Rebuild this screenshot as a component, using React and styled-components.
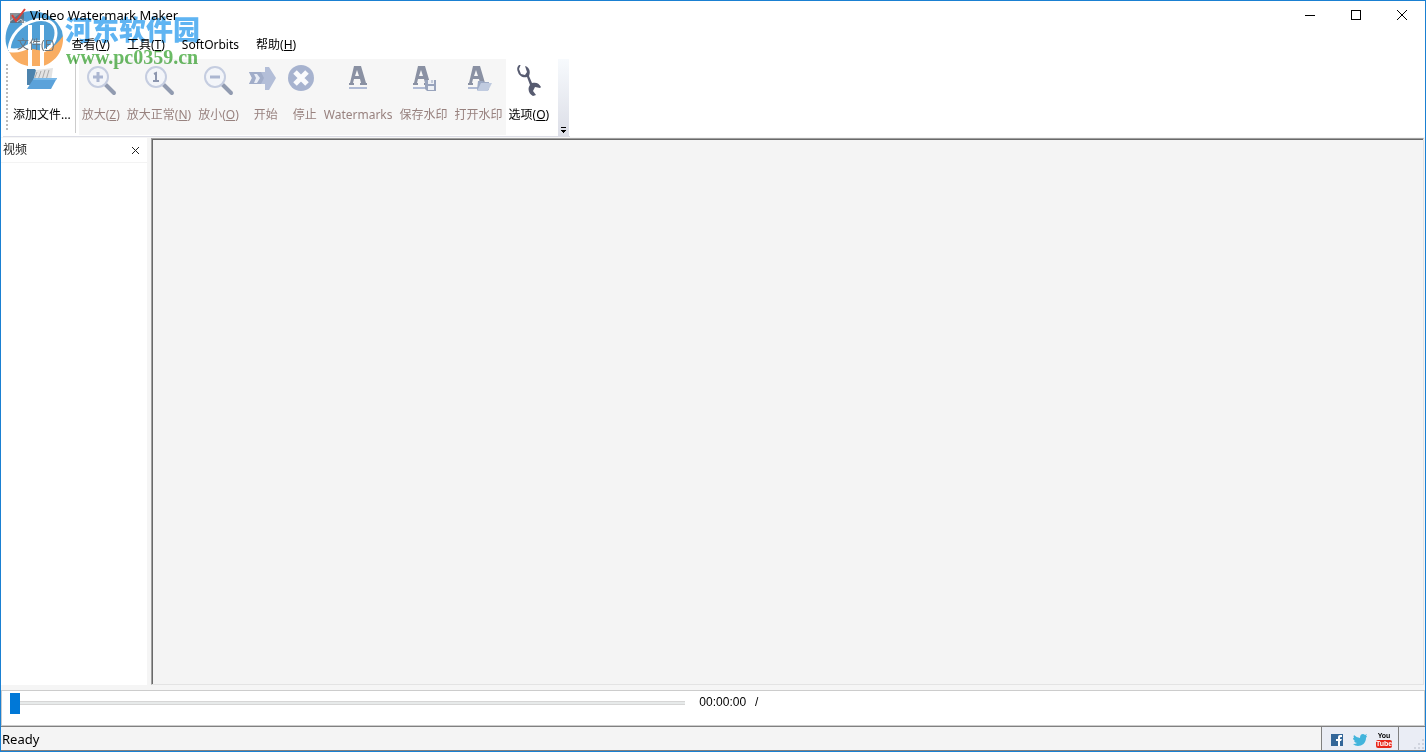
import React, { useState } from 'react';
import styled, { createGlobalStyle } from 'styled-components';

const GlobalStyle = createGlobalStyle`
  * {
    box-sizing: border-box;
  }
  body {
    margin: 0;
    font-family: 'Noto Sans', 'Noto Sans CJK SC', sans-serif;
    font-size: 12px;
    line-height: 16px;
    color: #000;
  }
  button {
    font: inherit;
    color: inherit;
    background: none;
    border: 0;
    padding: 0;
  }
`;

const tools = [
  { id: 'zoomIn', label: '放大', hotkey: 'Z' },
  { id: 'zoomNormal', label: '放大正常', hotkey: 'N' },
  { id: 'zoomOut', label: '放小', hotkey: 'O' },
  { id: 'start', label: '开始' },
  { id: 'stop', label: '停止' },
  { id: 'text', label: 'Watermarks' },
  { id: 'saveText', label: '保存水印' },
  { id: 'openText', label: '打开水印' },
];

const menus = [
  { label: '文件', hotkey: 'F' },
  { label: '查看', hotkey: 'V' },
  { label: '工具', hotkey: 'T' },
  { label: 'SoftOrbits' },
  { label: '帮助', hotkey: 'H' },
];

function Caption({ label, hotkey }) {
  return (
    <>
      {label}
      {hotkey && (
        <>
          (<u>{hotkey}</u>)
        </>
      )}
    </>
  );
}

function Magnifier({ children }) {
  return (
    <svg width="32" height="32" viewBox="0 0 32 32">
      <path d="M21 20l8 8" stroke="#919bb0" strokeWidth="4" strokeLinecap="round" />
      <circle cx="13" cy="12" r="10" fill="#f3f5f9" stroke="#c5cde0" strokeWidth="2" />
      {children}
    </svg>
  );
}

function LetterA({ shift = 0, children }) {
  return (
    <svg width="32" height="32" viewBox="0 0 32 32">
      <g transform={`translate(${shift} 0)`}>
        <path
          fillRule="evenodd"
          d="M12 1h7l5 17h1v2h-7v-2h1l-1-4h-6l-1 4h1v2H7v-2h1zM15 5l-2 6h4z"
          fill="#8a91a3"
        />
        <path d="M7 23h18" stroke="#b0bbd5" strokeWidth="2" />
      </g>
      {children}
    </svg>
  );
}

function ToolIcon({ id }) {
  switch (id) {
    case 'zoomIn':
      return (
        <Magnifier>
          <path d="M13 7v10M8 12h10" stroke="#abb6d1" strokeWidth="3" />
        </Magnifier>
      );
    case 'zoomNormal':
      return (
        <Magnifier>
          <path d="M11 9l2-1v8M10 16h6" fill="none" stroke="#8c96af" strokeWidth="2" />
        </Magnifier>
      );
    case 'zoomOut':
      return (
        <Magnifier>
          <path d="M8 12h10" stroke="#abb6d1" strokeWidth="3" />
        </Magnifier>
      );
    case 'start':
      return (
        <svg width="32" height="32" viewBox="0 0 32 32">
          <path d="M3 7h16V2h4l7 11-7 12h-4v-6H3l3-6z" fill="#b3bed8" />
          <path d="M3 7h12l3 6-3 6H3l3-6z" fill="#a1adc9" />
          <path d="M8 9h3l3 4-3 5H8l2-5z" fill="#e8ecf5" />
        </svg>
      );
    case 'stop':
      return (
        <svg width="32" height="32" viewBox="0 0 32 32">
          <circle cx="16" cy="13" r="13" fill="#a7b3cf" />
          <path d="M10 7l12 12M22 7L10 19" stroke="#fafbfd" strokeWidth="5" />
        </svg>
      );
    case 'text':
      return <LetterA />;
    case 'saveText':
      return (
        <LetterA shift={-2}>
          <path d="M17 15h11v11H19l-2-2z" fill="#98a3bc" />
          <path d="M20 15h6v4h-6zM20 21h6v4h-6z" fill="#eef1f6" />
          <path d="M24 15v3" stroke="#98a3bc" />
        </LetterA>
      );
    case 'openText':
      return (
        <LetterA shift={-2}>
          <path d="M15 16h5l1 1h5v8H14z" fill="#9daac5" />
          <path d="M18 18h11l-4 8H14z" fill="#c0cbe0" />
        </LetterA>
      );
    case 'options':
      return (
        <svg width="32" height="32" viewBox="0 0 32 32">
          <path
            d="M8-2C5-1 3 2 5 6c1 4 5 6 9 5l3 8c-3 4-1 9 3 11l3-1-3-4 2-4 5 1 1-1c-2-4-5-5-9-4l-3-7c2-5 0-9-4-10l2 6-2 3-4-1-2-5z"
            transform="translate(0 1)"
            fill="#575b70"
          />
        </svg>
      );
    default:
      return (
        <svg width="32" height="32" viewBox="0 0 32 32">
          <path d="M1 4h8l2 3h4v13H1z" fill="#4d83ad" />
          <path d="M10 5l17-2-2 14H7z" fill="#e3e3e3" />
          <path d="M11 7L8 15M15 6l-3 9M19 5l-3 10M23 5l-3 10" stroke="#aaa" />
          <path d="M8 13h23l-6 11H1z" fill="#5ba2da" />
          <path d="M8 13h23l-1 2H7z" fill="#79b8e8" />
        </svg>
      );
  }
}

function SiteLogo() {
  return (
    <svg width="60" height="60" viewBox="0 0 60 60">
      <path
        d="M2 36C-1 18 11 3 28 3c13 0 25 8 30 20l1 6c-4 8-10 13-18 16H6q-3-4-4-9z"
        fill="#4f9fd6"
      />
      <path d="M59 28c1 14-7 26-20 30H24C14 56 8 51 5 43l19-3 15 3c9-2 15-8 20-15z" fill="#f9ad62" />
      {/* white strokes that cut the disc into its parts */}
      <g fill="none" stroke="#fff">
        <path d="M5 42C6 28 16 16 32 12c12-2 20 3 20 13 0 9-6 16-15 19" strokeWidth="3" />
        <path d="M5 42q10 2 20-4" strokeWidth="4" />
        <path d="M26 17v42M38 17v42" strokeWidth="4" />
        <path d="M26 34h12" strokeWidth="3" />
      </g>
      <path d="M19 10l1 3 3 1-3 1-1 3-1-3-3-1 3-1z" fill="#fff" />
    </svg>
  );
}

function App() {
  const [position, setPosition] = useState(0);

  return (
    <Window>
      <GlobalStyle />
      <TitleBar>
        <AppIcon width="17" height="16" viewBox="0 0 17 16">
          <path d="M1 5h14v10H1z" fill="#59616b" opacity="0.7" />
          <path d="M1 13l4-3 3 4 4-3 2 3" stroke="#c5c9ce" fill="none" />
          <path d="M3 7l4 6L16 1" stroke="#db4137" strokeWidth="2" fill="none" />
        </AppIcon>
        <Title>Video Watermark Maker</Title>
        <CaptionButton aria-label="Minimize">
          <svg width="12" height="12" shapeRendering="crispEdges">
            <path d="M1 6h10v1H1z" />
          </svg>
        </CaptionButton>
        <CaptionButton aria-label="Maximize">
          <svg width="12" height="12" shapeRendering="crispEdges">
            <path fillRule="evenodd" d="M1 1h10v10H1zM2 2v8h8V2z" />
          </svg>
        </CaptionButton>
        <CaptionButton aria-label="Close">
          <svg width="12" height="12">
            <path d="M1 1l10 10M11 1L1 11" stroke="#000" />
          </svg>
        </CaptionButton>
      </TitleBar>

      <MenuBar>
        {menus.map((menu) => (
          <MenuItem key={menu.label} $dimmed={menu.hotkey === 'F'}>
            <Caption label={menu.label} hotkey={menu.hotkey} />
          </MenuItem>
        ))}
      </MenuBar>

      <ToolBar>
        <Gripper />
        <ToolButton>
          <ToolIcon id="add" />
          <ToolLabel>添加文件...</ToolLabel>
        </ToolButton>
        <Separator />
        <DisabledTools>
          {tools.map((tool) => (
            <ToolButton key={tool.id} disabled>
              <ToolIcon id={tool.id} />
              <ToolLabel>
                <Caption label={tool.label} hotkey={tool.hotkey} />
              </ToolLabel>
            </ToolButton>
          ))}
        </DisabledTools>
        <ToolButton>
          <ToolIcon id="options" />
          <ToolLabel>
            <Caption label="选项" hotkey="O" />
          </ToolLabel>
        </ToolButton>
        <Overflow aria-label="Toolbar options">
          <svg width="7" height="7" shapeRendering="crispEdges">
            <path d="M1 0h5v1H1zM1 3h5v1H1zM2 4h3v1H2zM3 5h1v1H3z" />
          </svg>
        </Overflow>
      </ToolBar>

      <Workspace>
        <SidePanel>
          <PanelHeader>
            <span>视频</span>
            <PanelClose aria-label="Close panel">
              <svg width="9" height="9">
                <path d="M1 1l7 7M8 1L1 8" stroke="#222" />
              </svg>
            </PanelClose>
          </PanelHeader>
        </SidePanel>
        <Preview />
      </Workspace>

      <Player>
        <SeekBar
          type="range"
          aria-label="Position"
          min="0"
          max="100"
          value={position}
          onChange={(e) => setPosition(Number(e.target.value))}
        />
        <Time>
          <span>00:00:00</span>
          <span>/</span>
        </Time>
      </Player>

      <StatusBar>
        <StatusText>Ready</StatusText>
        <Social>
          <a href="#facebook" aria-label="Facebook">
            <svg width="14" height="14" viewBox="0 0 14 14">
              <path d="M1 1h12v12H1z" fill="#336699" />
              <path d="M8 13V8H6V6h2V4q0-2 2-2h2v2h-1q-1 0-1 1v1h2l-1 2h-1v5z" fill="#fff" />
            </svg>
          </a>
          <a href="#twitter" aria-label="Twitter">
            <svg width="14" height="14" viewBox="0 0 14 14">
              <path
                d="M1 2q3 3 6 3 0-4 3-4 1 0 2 1l2-1-1 2 1 0-1 2c0 5-4 8-8 8q-3 0-5-2 3 0 4-1-2 0-3-2h1Q0 7 0 5l1 0Q0 4 1 2z"
                fill="#42b4dc"
              />
            </svg>
          </a>
          <YouTube href="#youtube" aria-label="YouTube">
            <span>You</span>
            <b>Tube</b>
          </YouTube>
        </Social>
        <SizeGrip>
          <svg width="12" height="12" viewBox="0 0 12 12">
            <path d="M9 1h2v2H9zM5 5h2v2H5zM9 5h2v2H9zM1 9h2v2H1zM5 9h2v2H5zM9 9h2v2H9z" fill="#d0d4de" />
          </svg>
        </SizeGrip>
      </StatusBar>

      <SiteMark>
        <SiteLogo />
        <SiteText>
          <SiteName>河东软件园</SiteName>
          <SiteUrl>www.pc0359.cn</SiteUrl>
        </SiteText>
      </SiteMark>
    </Window>
  );
}

const Window = styled.div`
  position: relative;
  display: flex;
  flex-direction: column;
  height: 100vh;
  background: #fff;
  border: 1px solid #1a80d2;
  overflow: hidden;
`;

const TitleBar = styled.header`
  display: flex;
  align-items: center;
  height: 30px;
  padding-left: 8px;
`;

const AppIcon = styled.svg`
  position: relative;
  z-index: 1;
`;

const Title = styled.span`
  position: relative;
  z-index: 1;
  flex: 1;
  padding: 0 0 2px 4px;
  font-size: 13px;
`;

const CaptionButton = styled.button`
  display: flex;
  align-items: center;
  justify-content: center;
  width: 46px;
  height: 30px;
  padding-bottom: 2px;
`;

const MenuBar = styled.nav`
  display: flex;
  gap: 17px;
  height: 28px;
  padding: 0 16px;
`;

const MenuItem = styled.button`
  position: relative;
  z-index: 1;
  height: 28px;
  color: ${(props) => (props.$dimmed ? '#6a727a' : '#000')};
  white-space: nowrap;
`;

const ToolBar = styled.div`
  display: flex;
  height: 78px;
  padding-left: 5px;
  background: linear-gradient(#dcdde6, #dcdde6) left 2px bottom / 567px 1px no-repeat;
`;

const Gripper = styled.div`
  width: 2px;
  margin: 5px 2px 7px 0;
  background: repeating-linear-gradient(#bbb 0 2px, transparent 2px 4px);
`;

const ToolLabel = styled.span`
  align-self: flex-end;
  white-space: nowrap;
`;

const ToolButton = styled.button`
  display: flex;
  flex-direction: column;
  align-items: center;
  gap: 10px;
  min-width: 38px;
  height: 77px;
  padding: 6px 3px 0;

  &:disabled {
    color: #98827f;
  }
`;

const Separator = styled.div`
  width: 1px;
  margin: 0 3px 4px 1px;
  background: #ccc;
`;

const DisabledTools = styled.div`
  display: flex;
  gap: 1px;
  height: 76px;
  background: #f6f6f6;
`;

const Overflow = styled.button`
  display: flex;
  align-items: flex-end;
  justify-content: center;
  width: 11px;
  height: 77px;
  margin-left: 6px;
  padding-bottom: 2px;
  background: linear-gradient(#f7fafd, #dcdee7);
`;

const Workspace = styled.main`
  display: flex;
  flex: 1;
  gap: 4px;
  min-height: 0;
  padding: 1px 1px 1px 0;
  background: #f5f5f5;
`;

const SidePanel = styled.aside`
  width: 146px;
  background: #fff;
`;

const PanelHeader = styled.div`
  display: flex;
  justify-content: space-between;
  height: 25px;
  padding: 4px 7px 0 2px;
  color: #222;
  border-bottom: 1px solid #f3f3f3;
`;

const PanelClose = styled.button`
  display: flex;
  align-items: center;
  height: 16px;
`;

const Preview = styled.section`
  flex: 1;
  background: #f4f4f4;
  border: 1px solid;
  border-color: #a0a0a0 #e3e3e3 #e3e3e3 #a0a0a0;
  box-shadow: inset 1px 1px 0 #696969;
`;

const Player = styled.div`
  display: flex;
  align-items: flex-start;
  gap: 14px;
  height: 40px;
  padding: 2px 8px 0 9px;
  border-top: 4px solid #f5f5f5;
  box-shadow: inset 0 0 0 1px #ccc;
`;

const SeekBar = styled.input`
  appearance: none;
  flex: 0 0 48%;
  height: 22px;
  margin: 0;
  background:
    linear-gradient(#e7eaea, #e7eaea) center / 100% 2px no-repeat,
    linear-gradient(#d6d6d6, #d6d6d6) center / 100% 4px no-repeat;

  &::-webkit-slider-thumb {
    appearance: none;
    width: 10px;
    height: 21px;
    background: #0078d7;
  }
`;

const Time = styled.div`
  display: flex;
  gap: 9px;
  padding-top: 2px;
  font-family: 'Liberation Sans', sans-serif;
`;

const StatusBar = styled.footer`
  display: flex;
  height: 25px;
  background: #f4f4f4;
  border-top: 1px solid #808080;
  border-bottom: 1px solid #808080;
`;

const StatusText = styled.span`
  flex: 1;
  padding: 4px 1px 0;
  font-size: 13px;
`;

const Social = styled.div`
  display: flex;
  align-items: center;
  gap: 9px;
  width: 77px;
  padding: 3px 0 0 8px;
  background: #eaedf5;
  border-left: 1px solid #808080;

  svg {
    display: block;
  }
`;

const YouTube = styled.a`
  width: 16px;
  font: bold 7px/8px 'Liberation Sans', sans-serif;
  color: #000;
  text-align: center;
  text-decoration: none;

  span {
    display: block;
  }
  b {
    display: block;
    color: #fff;
    background: #e8261a;
    border-radius: 2px;
  }
`;

const SizeGrip = styled.div`
  display: flex;
  align-items: flex-end;
  justify-content: flex-end;
  width: 27px;
  background: #eaedf5;
  border-left: 1px solid #808080;
`;

const SiteMark = styled.div`
  position: absolute;
  top: 7px;
  left: 3px;
  display: flex;
  mix-blend-mode: multiply;
  pointer-events: none;
`;

const SiteText = styled.div`
  display: flex;
  flex-direction: column;
  padding: 4px 0 0 1px;
`;

const SiteName = styled.span`
  font: 900 27px/34px 'Noto Sans CJK SC', sans-serif;
  color: #5fb4f2;
`;

const SiteUrl = styled.span`
  padding-left: 1px;
  font: bold 20px/22px 'Liberation Serif', serif;
  color: #6bbb65;
`;

export default App;
